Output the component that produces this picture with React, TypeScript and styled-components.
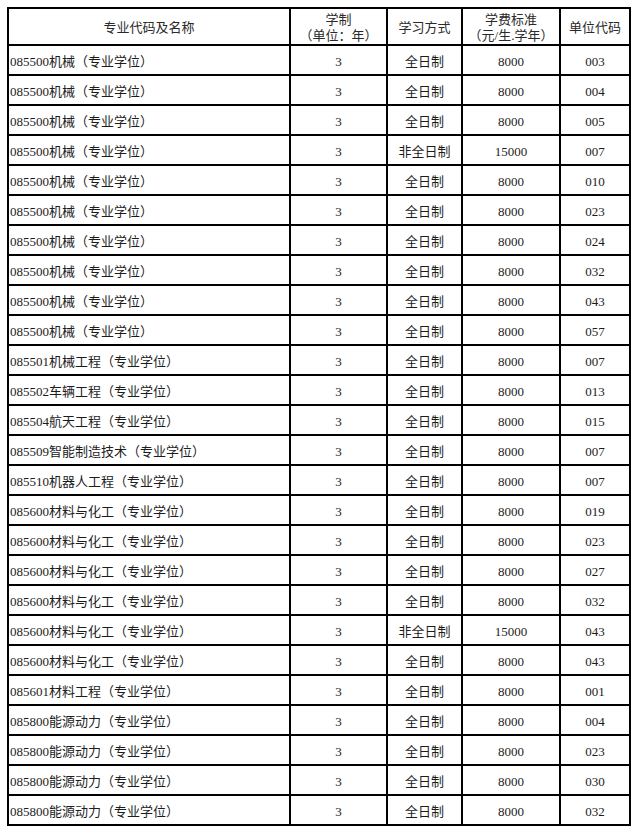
import React from "react";
import styled, { createGlobalStyle } from "styled-components";

interface FeeRow {
  major: string;
  mode: string;
  fee: string;
  unit: string;
}

const GlobalStyle = createGlobalStyle`
  html, body {
    margin: 0;
    padding: 0;
    background: #ffffff;
  }
`;

const Page = styled.div`
  padding: 7px 0 0 7px;
  font-family: "Liberation Serif", "Noto Sans CJK SC", serif;
  font-size: 13px;
  color: #1c1c1c;
`;

const Table = styled.table`
  width: 624px;
  table-layout: fixed;
  border-collapse: separate;
  border-spacing: 0;
  border-top: 2px solid #000;
  border-left: 2px solid #000;
`;

const Cell = styled.td<{ $left?: boolean }>`
  box-sizing: border-box;
  height: 30px;
  padding: 4px 0 0 ${(p) => (p.$left ? "1px" : "0")};
  border-right: 2px solid #000;
  border-bottom: 2px solid #000;
  text-align: ${(p) => (p.$left ? "left" : "center")};
  vertical-align: middle;
  white-space: nowrap;
  line-height: 16px;
`;

const HeadCell = styled.th`
  box-sizing: border-box;
  height: 37px;
  padding: 2px 0 0;
  border-right: 2px solid #000;
  border-bottom: 2px solid #000;
  font-weight: normal;
  text-align: center;
  vertical-align: middle;
  line-height: 16px;
  color: #2a2a2a;
`;

const rows: FeeRow[] = [
  { major: "085500机械", mode: "全日制", fee: "8000", unit: "003" },
  { major: "085500机械", mode: "全日制", fee: "8000", unit: "004" },
  { major: "085500机械", mode: "全日制", fee: "8000", unit: "005" },
  { major: "085500机械", mode: "非全日制", fee: "15000", unit: "007" },
  { major: "085500机械", mode: "全日制", fee: "8000", unit: "010" },
  { major: "085500机械", mode: "全日制", fee: "8000", unit: "023" },
  { major: "085500机械", mode: "全日制", fee: "8000", unit: "024" },
  { major: "085500机械", mode: "全日制", fee: "8000", unit: "032" },
  { major: "085500机械", mode: "全日制", fee: "8000", unit: "043" },
  { major: "085500机械", mode: "全日制", fee: "8000", unit: "057" },
  { major: "085501机械工程", mode: "全日制", fee: "8000", unit: "007" },
  { major: "085502车辆工程", mode: "全日制", fee: "8000", unit: "013" },
  { major: "085504航天工程", mode: "全日制", fee: "8000", unit: "015" },
  { major: "085509智能制造技术", mode: "全日制", fee: "8000", unit: "007" },
  { major: "085510机器人工程", mode: "全日制", fee: "8000", unit: "007" },
  { major: "085600材料与化工", mode: "全日制", fee: "8000", unit: "019" },
  { major: "085600材料与化工", mode: "全日制", fee: "8000", unit: "023" },
  { major: "085600材料与化工", mode: "全日制", fee: "8000", unit: "027" },
  { major: "085600材料与化工", mode: "全日制", fee: "8000", unit: "032" },
  { major: "085600材料与化工", mode: "非全日制", fee: "15000", unit: "043" },
  { major: "085600材料与化工", mode: "全日制", fee: "8000", unit: "043" },
  { major: "085601材料工程", mode: "全日制", fee: "8000", unit: "001" },
  { major: "085800能源动力", mode: "全日制", fee: "8000", unit: "004" },
  { major: "085800能源动力", mode: "全日制", fee: "8000", unit: "023" },
  { major: "085800能源动力", mode: "全日制", fee: "8000", unit: "030" },
  { major: "085800能源动力", mode: "全日制", fee: "8000", unit: "032" },
];

const App: React.FC = () => {
  return (
    <Page>
      <GlobalStyle />
      <Table>
        <colgroup>
          <col style={{ width: 282 }} />
          <col style={{ width: 97 }} />
          <col style={{ width: 75 }} />
          <col style={{ width: 98 }} />
          <col style={{ width: 70 }} />
        </colgroup>
        <thead>
          <tr>
            <HeadCell>专业代码及名称</HeadCell>
            <HeadCell>
              学制
              <br />
              （单位：年）
            </HeadCell>
            <HeadCell>学习方式</HeadCell>
            <HeadCell>
              学费标准
              <br />
              （元/生.学年）
            </HeadCell>
            <HeadCell>单位代码</HeadCell>
          </tr>
        </thead>
        <tbody>
          {rows.map((r, i) => (
            <tr key={i}>
              <Cell $left>{r.major}（专业学位）</Cell>
              <Cell>3</Cell>
              <Cell>{r.mode}</Cell>
              <Cell>{r.fee}</Cell>
              <Cell>{r.unit}</Cell>
            </tr>
          ))}
        </tbody>
      </Table>
    </Page>
  );
};

export default App;
